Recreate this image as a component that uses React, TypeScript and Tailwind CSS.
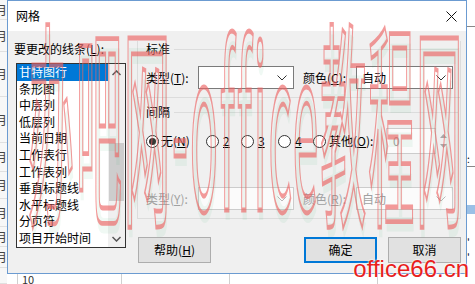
import React from 'react';

const items = ['甘特图行', '条形图', '中层列', '低层列', '当前日期', '工作表行', '工作表列', '垂直标题线', '水平标题线', '分页符', '项目开始时间'];

// rows of the sheet behind the dialog: [height, shows 月]
const sheetRows: [number, boolean][] = [
  [20, true], [32, true], [45, true], [46, true], [29, true], [27, true], [28, true], [20, true], [21, true], [16, false],
];

const Chevron: React.FC<{ disabled?: boolean }> = ({ disabled }) => (
  <svg width="10" height="6" viewBox="0 0 10 6" className="shrink-0">
    <polyline points="0.5,0.5 5,5 9.5,0.5" fill="none" stroke={disabled ? '#b8b8b8' : '#333'} strokeWidth="1" />
  </svg>
);

interface SelectProps {
  value?: string;
  disabled?: boolean;
  className?: string;
}

const Select: React.FC<SelectProps> = ({ value, disabled, className = '' }) => (
  <div
    className={`flex items-center justify-between h-[23px] border pl-[5px] pr-[6px] ${
      disabled ? 'border-[#cccccc] bg-[#fbfbfb] text-[#a0a0a0]' : 'border-[#7a7a7a] bg-white text-black'
    } ${className}`}
  >
    <span>{value}</span>
    <Chevron disabled={disabled} />
  </div>
);

const Radio: React.FC<{ checked?: boolean }> = ({ checked }) => (
  <span className="flex items-center justify-center w-[13px] h-[13px] rounded-full border border-[#333] bg-white shrink-0">
    {checked && <span className="w-[7px] h-[7px] rounded-full bg-[#333]" />}
  </span>
);

const Btn: React.FC<{ children: React.ReactNode; primary?: boolean; className?: string }> = ({ children, primary, className = '' }) => (
  <div
    className={`flex items-center justify-center w-[73px] h-[26px] bg-[#e1e1e1] ${
      primary ? 'border-2 border-[#0078d7]' : 'border border-[#adadad]'
    } ${className}`}
  >
    {children}
  </div>
);

const GroupHeader: React.FC<{ label: string }> = ({ label }) => (
  <div className="flex items-center h-[16px] pl-[8px] pr-[2px]">
    <span>{label}</span>
    <span className="flex-1 h-px bg-[#dcdcdc] ml-[4px]" />
  </div>
);

export default function App() {
  return (
    <div className="relative w-[475px] h-[284px] overflow-hidden bg-white text-[12px] leading-[16px] text-black font-['Noto_Sans_CJK_SC',sans-serif]">
      {/* sheet behind the dialog */}
      <div className="flex h-full">
        <div className="w-[7px] flex flex-col overflow-hidden bg-[#f7f7f7] text-[#444]">
          {sheetRows.map(([h, ch], i) => (
            <div key={i} style={{ height: h }} className="flex items-center shrink-0 border-b border-[#e0e0e0]">
              {ch && <span className="block -ml-[5px]">月</span>}
            </div>
          ))}
        </div>
        <div className="flex-1 flex flex-col">
          <div className="flex-1" />
          <div className="h-[10px] flex items-start text-[11px] leading-[10px] text-[#333]">
            <span className="w-[11px] h-full border-r border-[#d0d0d0]" />
            <span className="w-[104px] h-full border-r border-[#d0d0d0] pl-[4px]">10</span>
            <span className="w-[108px] h-full border-r border-[#d0d0d0]" />
            <span className="w-[148px] h-full border-r border-[#d0d0d0]" />
          </div>
        </div>
        <div className="w-[8px] flex flex-col">
          <div className="h-[27px] border-b border-[#888]" />
          <div className="h-[124px]" />
          <div className="h-[16px] text-[10px] leading-[16px] border-b border-[#888]">:</div>
          <div className="h-[38px]" />
          <div className="h-[9px] bg-[#9bc0e6]" />
          <div className="h-[20px]" />
          <div className="text-[10px] leading-[15px]">'</div>
          <div className="text-[10px] leading-[15px]">'</div>
        </div>
      </div>

      {/* dialog window */}
      <div className="absolute left-[7px] top-0 w-[460px] h-[274px] flex flex-col border border-[#6b9bd1] bg-[#f0f0f0]">
        <div className="h-[30px] bg-white flex items-center justify-between pl-[8px] pr-[9px]">
          <span>网格</span>
          <svg width="11" height="11" viewBox="0 0 11 11">
            <path d="M0.5 0.5 L10.5 10.5 M10.5 0.5 L0.5 10.5" stroke="#111" strokeWidth="1" />
          </svg>
        </div>

        <div className="flex pt-[10px] pl-[8px]">
          {/* left column */}
          <div className="w-[110px] flex flex-col">
            <div className="h-[16px] -ml-[2px]">
              要更改的线条(<u>L</u>):
            </div>
            <div className="mt-[6px] h-[185px] border border-[#333] bg-white flex">
              <div className="flex-1 flex flex-col">
                {items.map((t, i) => (
                  <div
                    key={t}
                    className={`h-[16.6px] leading-[16.6px] pl-[2px] whitespace-nowrap ${
                      i === 0 ? 'bg-[#0078d7] text-white' : ''
                    }`}
                  >
                    {t}
                  </div>
                ))}
              </div>
              <div className="w-[17px] flex flex-col bg-[#f0f0f0]">
                <div className="h-[17px] flex items-center justify-center">
                  <svg width="9" height="6" viewBox="0 0 9 6">
                    <polyline points="0.5,5 4.5,1 8.5,5" fill="none" stroke="#555" strokeWidth="1.5" />
                  </svg>
                </div>
                <div className="flex-1 flex flex-col">
                  <div className="h-[62px]" />
                  <div className="h-[58px] mx-[1px] bg-[#cdcdcd]" />
                </div>
                <div className="h-[17px] flex items-center justify-center">
                  <svg width="9" height="6" viewBox="0 0 9 6">
                    <polyline points="0.5,1 4.5,5 8.5,1" fill="none" stroke="#555" strokeWidth="1.5" />
                  </svg>
                </div>
              </div>
            </div>
          </div>

          {/* right column */}
          <div className="ml-[11px] w-[324px] flex flex-col">
            <div className="border-x border-b border-[#dcdcdc] pb-[8px]">
              <GroupHeader label="标准" />
              <div className="mt-[9px] h-[23px] flex items-center pl-[8px]">
                <span className="w-[52px]">
                  类型(<u>T</u>):
                </span>
                <Select className="w-[96px]" />
                <span className="ml-[9px] w-[53px]">
                  颜色(<u>C</u>):
                </span>
                <Select className="w-[97px]" value="自动" />
              </div>
              <div className="mt-[8px] h-px bg-[#dcdcdc]" />
              <div className="mt-[6px]">
                <GroupHeader label="间隔" />
              </div>
              <div className="mt-[8px] h-[26px] flex items-center pl-[8px]">
                <div className="w-[60px] flex items-center gap-[2px]">
                  <Radio checked />
                  <span>
                    无(<u>N</u>)
                  </span>
                </div>
                <div className="w-[35px] flex items-center gap-[4px]">
                  <Radio />
                  <u>2</u>
                </div>
                <div className="w-[37px] flex items-center gap-[4px]">
                  <Radio />
                  <u>3</u>
                </div>
                <div className="w-[35px] flex items-center gap-[4px]">
                  <Radio />
                  <u>4</u>
                </div>
                <div className="w-[73px] flex items-center gap-[3px]">
                  <Radio />
                  <span>
                    其他(<u>O</u>):
                  </span>
                </div>
                <div className="w-[50px] h-[26px] border border-[#cccccc] bg-[#fbfbfb] text-[#a0a0a0] flex items-center pl-[6px]">
                  0
                </div>
                <div className="ml-[4px] flex flex-col gap-[6px]">
                  <svg width="7" height="4" viewBox="0 0 7 4">
                    <polygon points="0,4 3.5,0 7,4" fill="#a8a8a8" />
                  </svg>
                  <svg width="7" height="4" viewBox="0 0 7 4">
                    <polygon points="0,0 3.5,4 7,0" fill="#a8a8a8" />
                  </svg>
                </div>
              </div>
              <div className="mt-[33px] h-[23px] flex items-center pl-[8px] text-[#a0a0a0]">
                <span className="w-[52px]">
                  类型(<u>Y</u>):
                </span>
                <Select className="w-[96px]" disabled />
                <span className="ml-[9px] w-[53px]">
                  颜色(<u>R</u>):
                </span>
                <Select className="w-[97px]" value="自动" disabled />
              </div>
            </div>

            <div className="mt-[18px] flex items-center">
              <Btn className="ml-[1px]">
                帮助(<u>H</u>)
              </Btn>
              <div className="flex-1" />
              <Btn primary>确定</Btn>
              <Btn className="ml-[11px]">取消</Btn>
            </div>
          </div>
        </div>
      </div>

      {/* watermark over the screenshot */}
      <div className="absolute left-[28px] top-[4px] pointer-events-none origin-top scale-y-[4.8] whitespace-nowrap text-[46px] leading-[46px] tracking-[2px] text-transparent [-webkit-text-stroke:1px_rgba(236,100,100,0.65)] [text-shadow:1px_2px_0_rgba(70,180,110,0.08)]">
        办吧网-office教程网
      </div>
      <div className="absolute right-[6px] bottom-[4px] pointer-events-none font-['Liberation_Sans',sans-serif] text-[24px] leading-[22px] text-[#e8201c] [text-shadow:0_0_2px_#fff,0_0_2px_#fff]">
        office66.cn
      </div>
    </div>
  );
}
